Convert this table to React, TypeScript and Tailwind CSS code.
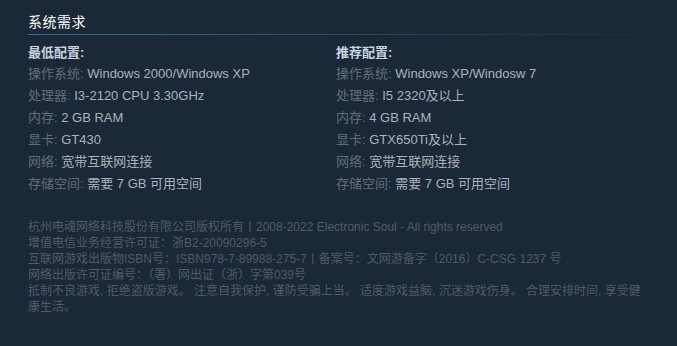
import React from "react";

const F = { fontFamily: '"Liberation Sans", Arial, "Noto Sans CJK SC", sans-serif' };

const minReq: [string, string][] = [
  ["操作系统:", "Windows 2000/Windows XP"],
  ["处理器:", "I3-2120 CPU 3.30GHz"],
  ["内存:", "2 GB RAM"],
  ["显卡:", "GT430"],
  ["网络:", "宽带互联网连接"],
  ["存储空间:", "需要 7 GB 可用空间"],
];
const recReq: [string, string][] = [
  ["操作系统:", "Windows XP/Windosw 7"],
  ["处理器:", "I5 2320及以上"],
  ["内存:", "4 GB RAM"],
  ["显卡:", "GTX650Ti及以上"],
  ["网络:", "宽带互联网连接"],
  ["存储空间:", "需要 7 GB 可用空间"],
];

function Col({ title, rows }: { title: string; rows: [string, string][] }) {
  return (
    <div className="w-[308px]">
      <div className="text-[13px] leading-[20px] font-bold text-[#c6d4df]">{title}</div>
      <ul>
        {rows.map(([k, v]) => (
          <li key={k} className="text-[13px] leading-[22px] text-[#acb2b8] whitespace-nowrap">
            <span className="text-[#626d78]">{k}</span> {v}
          </li>
        ))}
      </ul>
    </div>
  );
}

export default function App() {
  return (
    <div className="w-[677px] h-[346px] bg-[#1b2838] pt-[12px] pl-[28px] overflow-hidden" style={F}>
      <div className="w-[616px]">
        <h2 className="text-[14px] leading-[20px] text-white tracking-[0.5px] pb-[2px]">系统需求</h2>
        <div className="h-px w-[650px] bg-gradient-to-r from-[#3b6e8c] to-transparent" />
        <div className="flex mt-[8px]">
          <Col title="最低配置:" rows={minReq} />
          <Col title="推荐配置:" rows={recReq} />
        </div>
        <div className="mt-[24px] text-[12px] leading-[16px] text-[#505b67]">
          <p>杭州电魂网络科技股份有限公司版权所有丨2008-2022 Electronic Soul - All rights reserved</p>
          <p>增值电信业务经营许可证：浙B2-20090296-5</p>
          <p>互联网游戏出版物ISBN号：ISBN978-7-89988-275-7丨备案号：文网游备字〔2016〕C-CSG 1237 号</p>
          <p>网络出版许可证编号：（署）网出证（浙）字第039号</p>
          <p>抵制不良游戏, 拒绝盗版游戏。 注意自我保护, 谨防受骗上当。 适度游戏益脑, 沉迷游戏伤身。 合理安排时间, 享受健康生活。</p>
        </div>
      </div>
    </div>
  );
}
